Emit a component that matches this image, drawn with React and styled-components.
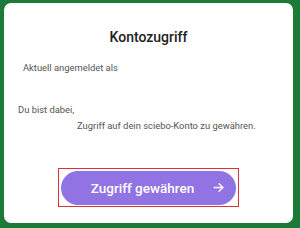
import styled, { createGlobalStyle } from 'styled-components'

const GlobalStyle = createGlobalStyle`
  html, body {
    margin: 0;
    padding: 0;
    width: 300px;
    height: 228px;
    overflow: hidden;
    background: #1b7a37;
    font-family: Roboto, "Noto Sans", sans-serif;
  }
`

const Page = styled.div`
  width: 300px;
  height: 228px;
  box-sizing: border-box;
  padding: 3px 7px 5px 4px;
`

const Card = styled.div`
  height: 100%;
  background: #ffffff;
  border-radius: 7px;
  display: flex;
  flex-direction: column;
  box-sizing: border-box;
  padding-top: 25px;
`

const Title = styled.h1`
  margin: 0;
  font-size: 14px;
  font-weight: 500;
  color: #222;
  text-align: center;
  line-height: 18px;
`

const Line = styled.p`
  margin: 0;
  font-size: 9.4px;
  line-height: 12px;
  color: #555;
  padding-left: ${(p) => p.indent}px;
  margin-top: ${(p) => p.gap}px;
`

const Highlight = styled.div`
  align-self: flex-start;
  margin: 36px 0 0 54px;
  border: 1.5px solid #d8333d;
  padding: 1.5px 2.5px 1.5px 1.5px;
`

const Button = styled.button`
  width: 175px;
  height: 34px;
  border: none;
  border-radius: 17px;
  background: #9173e4;
  color: #fff;
  font-family: Roboto, sans-serif;
  font-size: 13.5px;
  font-weight: 500;
  display: grid;
  grid-template-columns: 1fr auto 1fr;
  align-items: center;
  padding: 0 11px 0 0;
  cursor: pointer;
`

const Label = styled.span`
  grid-column: 2;
`

const Icon = styled.span`
  grid-column: 3;
  justify-self: end;
  display: flex;
`

function Arrow() {
  return (
    <svg width="13" height="13" viewBox="0 0 24 24" fill="none" stroke="#fff" strokeWidth="2.4" strokeLinecap="round" strokeLinejoin="round">
      <path d="M4 12h16" />
      <path d="M13 5l7 7-7 7" />
    </svg>
  )
}

export default function App() {
  return (
    <>
      <GlobalStyle />
      <Page>
        <Card>
          <Title>Kontozugriff</Title>
          <Line indent={19} gap={16}>Aktuell angemeldet als</Line>
          <Line indent={14} gap={30}>Du bist dabei,</Line>
          <Line indent={73} gap={4}>Zugriff auf dein sciebo-Konto zu gewähren.</Line>
          <Highlight>
            <Button>
              <Label>Zugriff gewähren</Label>
              <Icon><Arrow /></Icon>
            </Button>
          </Highlight>
        </Card>
      </Page>
    </>
  )
}
